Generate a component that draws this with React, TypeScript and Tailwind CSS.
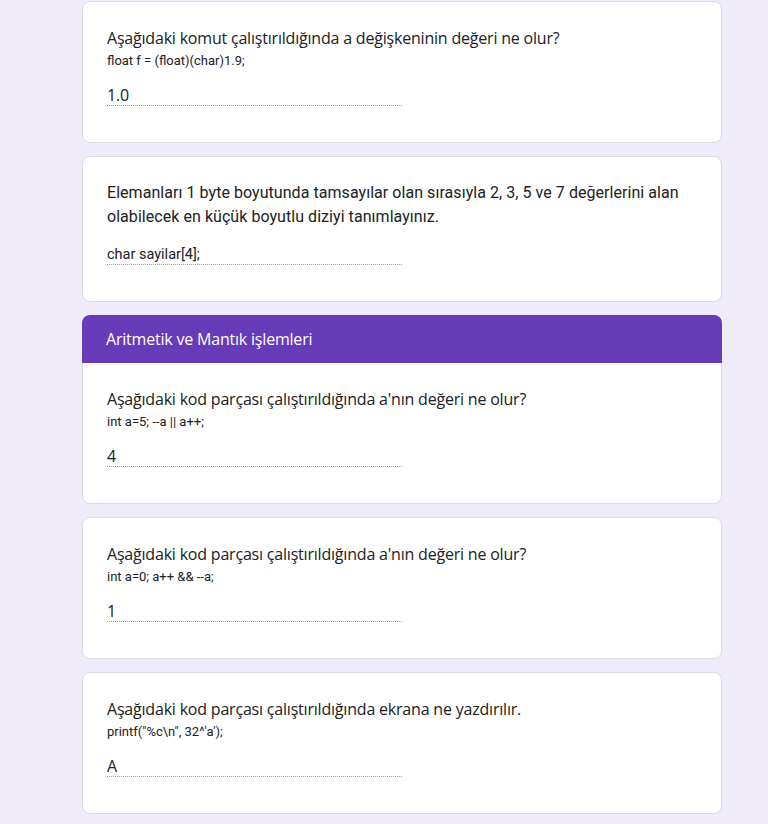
import React from 'react';

interface QuestionProps {
    title: string;
    code?: string;
    answer: string;
}

const gsans = "font-['Open_Sans',sans-serif] tracking-[-0.2px]";

const QuestionBody: React.FC<QuestionProps> = ({ title, code, answer }) => {
    return (
        <>
            <div className={`${gsans} text-base leading-6 text-[#202124]`}>{title}</div>
            {code && <div className="font-['Roboto',sans-serif] text-[13px] leading-[22px] text-[#202124]">{code}</div>}
            <div className={`${gsans} text-base mt-[9px] w-1/2 h-[25px] pt-1 leading-5 text-[#202124] border-b border-dotted border-[#9aa0a6]`}>
                {answer}
            </div>
        </>
    );
};

const Card: React.FC<QuestionProps> = (props) => {
    return (
        <div className="bg-white border border-[#dadce0] rounded-lg px-6 pt-6 pb-[36px]">
            <QuestionBody {...props} />
        </div>
    );
};

const SectionCard: React.FC<QuestionProps & { section: string }> = ({ section, ...props }) => {
    return (
        <div>
            <div className={`${gsans} h-12 flex items-center px-6 rounded-t-lg bg-[#673ab7] text-white text-base font-medium`}>
                {section}
            </div>
            <div className="bg-white border-x border-b border-[#dadce0] rounded-b-lg px-6 pt-6 pb-[36px]">
                <QuestionBody {...props} />
            </div>
        </div>
    );
};

export default function App() {
    return (
        <div className="min-h-screen bg-[#f0ebf8] pt-px pb-6">
            <div className="ml-[82px] w-[640px] flex flex-col gap-[13px]">
                <Card
                    title="Aşağıdaki komut çalıştırıldığında a değişkeninin değeri ne olur?"
                    code="float f = (float)(char)1.9;"
                    answer="1.0"
                />
                <div className="bg-white border border-[#dadce0] rounded-lg px-6 pt-6 pb-[36px]">
                    <div className="font-['Roboto',sans-serif] font-normal tracking-[0.05px] text-base leading-6 text-[#202124]">
                        Elemanları 1 byte boyutunda tamsayılar olan sırasıyla 2, 3, 5 ve 7 değerlerini alan olabilecek en küçük boyutlu diziyi tanımlayınız.
                    </div>
                    <div className="font-['Roboto',sans-serif] text-[14.5px] mt-[11px] w-1/2 h-[25px] pt-[5px] leading-5 text-[#202124] border-b border-dotted border-[#9aa0a6]">
                        char sayilar[4];
                    </div>
                </div>
                <SectionCard
                    section="Aritmetik ve Mantık işlemleri"
                    title="Aşağıdaki kod parçası çalıştırıldığında a'nın değeri ne olur?"
                    code="int a=5; --a || a++;"
                    answer="4"
                />
                <Card
                    title="Aşağıdaki kod parçası çalıştırıldığında a'nın değeri ne olur?"
                    code="int a=0; a++ && --a;"
                    answer="1"
                />
                <Card
                    title="Aşağıdaki kod parçası çalıştırıldığında ekrana ne yazdırılır."
                    code={'printf("%c\\n", 32^\'a\');'}
                    answer="A"
                />
            </div>
        </div>
    );
}
